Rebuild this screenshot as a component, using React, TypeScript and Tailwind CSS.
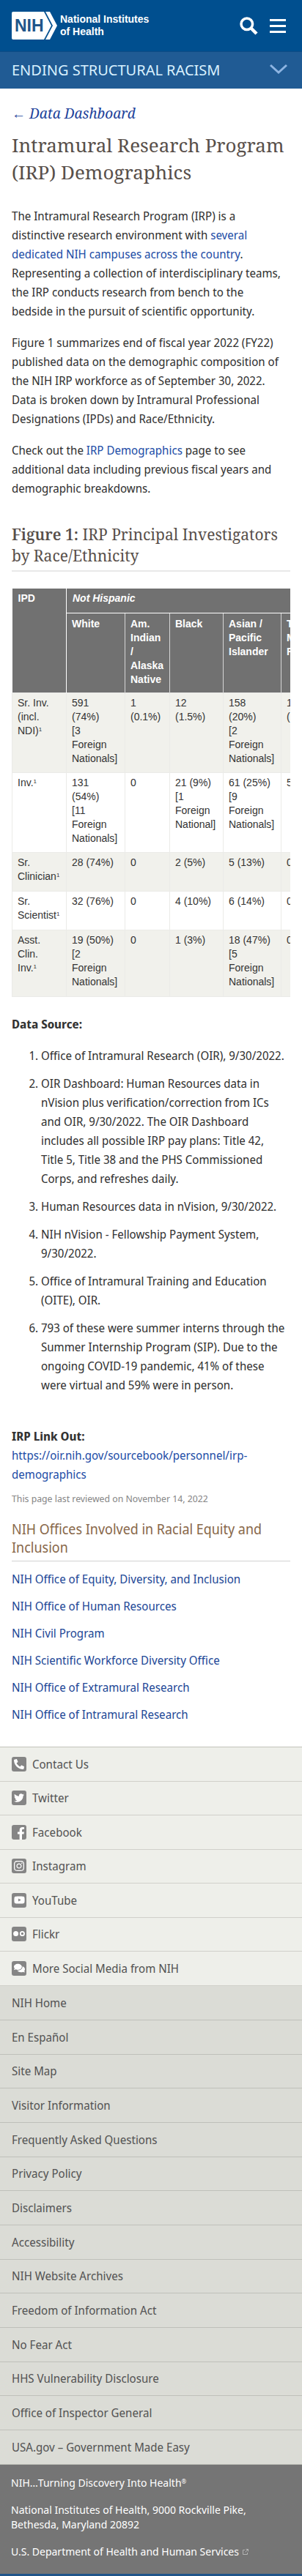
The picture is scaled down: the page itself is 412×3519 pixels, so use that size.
import type { ReactNode } from "react";
import { FaPhone, FaTwitter, FaFacebookF, FaInstagram, FaYoutube, FaComments } from "react-icons/fa";

function Logo() {
  return (
    <a href="#" aria-label="National Institutes of Health" className="flex items-center gap-1 text-white">
      <svg viewBox="0 0 62 38" className="h-[38px] w-[62px]" aria-hidden="true">
        <path d="M2 0H44L54 19L44 38H2Q0 38 0 36V2Q0 0 2 0Z" fill="#fff" />
        <path d="M46 0H52L62 19L52 38H46L56 19Z" fill="#fff" />
        <text x="4" y="27" fontSize="23" fontWeight="700" fill="#20558a" fontFamily="Liberation Sans, Arial, sans-serif">
          NIH
        </text>
      </svg>
      <span className="font-['Liberation_Sans',sans-serif] text-[14px] leading-[17px] font-bold">
        National Institutes
        <br />
        of Health
      </span>
    </a>
  );
}

function FlickrDots() {
  return (
    <svg viewBox="0 0 20 20" className="size-5" aria-hidden="true">
      <circle cx="5.6" cy="9.5" r="3.5" fill="#fff" />
      <circle cx="14.4" cy="9.5" r="2.6" fill="none" stroke="#fff" strokeWidth="1.8" />
    </svg>
  );
}

const social: { label: string; icon: ReactNode }[] = [
  { label: "Contact Us", icon: <FaPhone size={14} className="-scale-x-100" /> },
  { label: "Twitter", icon: <FaTwitter size={14} /> },
  { label: "Facebook", icon: <FaFacebookF size={17} className="translate-x-0.5 translate-y-0.5" /> },
  { label: "Instagram", icon: <FaInstagram size={16} /> },
  { label: "YouTube", icon: <FaYoutube size={15} /> },
  { label: "Flickr", icon: <FlickrDots /> },
  { label: "More Social Media from NIH", icon: <FaComments size={15} /> },
];

const siteLinks = [
  "NIH Home",
  "En Español",
  "Site Map",
  "Visitor Information",
  "Frequently Asked Questions",
  "Privacy Policy",
  "Disclaimers",
  "Accessibility",
  "NIH Website Archives",
  "Freedom of Information Act",
  "No Fear Act",
  "HHS Vulnerability Disclosure",
  "Office of Inspector General",
  "USA.gov – Government Made Easy",
];

const offices = [
  "NIH Office of Equity, Diversity, and Inclusion",
  "NIH Office of Human Resources",
  "NIH Civil Program",
  "NIH Scientific Workforce Diversity Office",
  "NIH Office of Extramural Research",
  "NIH Office of Intramural Research",
];

const sources = [
  "Office of Intramural Research (OIR), 9/30/2022.",
  "OIR Dashboard: Human Resources data in nVision plus verification/correction from ICs and OIR, 9/30/2022. The OIR Dashboard includes all possible IRP pay plans: Title 42, Title\u00a05, Title\u00a038 and the PHS Commissioned Corps, and refreshes daily.",
  "Human Resources data in nVision, 9/30/2022.",
  "NIH nVision - Fellowship Payment System, 9/30/2022.",
  "Office of Intramural Training and Education (OITE), OIR.",
  "793 of these were summer interns through the Summer Internship Program (SIP). Due to the ongoing COVID-19 pandemic, 41% of these were virtual and 59% were in person.",
];

const groups = ["White", "Am. Indian / Alaska Native", "Black", "Asian / Pacific Islander", "Two or More Races"];

const rows = [
  {
    name: "Sr. Inv. (incl. NDI)",
    height: "h-[109px]",
    cells: ["591\n(74%)\n[3\nForeign Nationals]", "1\n(0.1%)", "12\n(1.5%)", "158\n(20%)\n[2\nForeign Nationals]", "19\n(2%)"],
  },
  {
    name: "Inv.",
    height: "h-[109px]",
    cells: ["131\n(54%)\n[11\nForeign Nationals]", "0", "21 (9%)\n[1\nForeign National]", "61 (25%)\n[9\nForeign Nationals]", "5 (2%)"],
  },
  { name: "Sr. Clinician", height: "h-[53px]", cells: ["28 (74%)", "0", "2 (5%)", "5 (13%)", "0"] },
  { name: "Sr. Scientist", height: "h-[53px]", cells: ["32 (76%)", "0", "4 (10%)", "6 (14%)", "0"] },
  {
    name: "Asst.\nClin.\nInv.",
    height: "h-[91px]",
    cells: ["19 (50%)\n[2\nForeign Nationals]", "0", "1 (3%)", "18 (47%)\n[5\nForeign Nationals]", "0"],
  },
];

function InvestigatorTable() {
  return (
    <div className="mt-[23px] overflow-x-auto [scrollbar-width:none]">
      <table className="w-[430px] table-fixed border-collapse text-left align-top font-['Liberation_Sans',sans-serif] text-[14px] leading-[19px]">
        <colgroup>
          <col className="w-[74px]" />
          <col className="w-[80px]" />
          <col className="w-[61px]" />
          <col className="w-[73px]" />
          <col className="w-[79px]" />
          <col />
        </colgroup>
        <thead className="bg-[#717171] text-white">
          <tr className="h-[33px]">
            <th rowSpan={2} scope="col" className="border-r border-white px-2 py-1 align-top">
              IPD
            </th>
            <th colSpan={5} scope="colgroup" className="border-b border-white px-2 py-1 align-top italic">
              Not Hispanic
            </th>
          </tr>
          <tr className="h-[109px]">
            {groups.map((g) => (
              <th key={g} scope="col" className="border-r border-[#d6d6d6] px-[7px] py-[5px] align-top">
                {g}
              </th>
            ))}
          </tr>
        </thead>
        <tbody className="text-[#333]">
          {rows.map((row) => (
            <tr key={row.name} className={`${row.height} odd:bg-[#f1f1ec]`}>
              <th scope="row" className="border border-[#ebebe8] px-[7px] py-1 align-top font-normal whitespace-pre-line">
                {row.name}
                <sup className="text-[8px] leading-none">1</sup>
              </th>
              {row.cells.map((cell, i) => (
                <td key={i} className="border border-[#ebebe8] px-[7px] py-1 align-top whitespace-pre-line">
                  {cell}
                </td>
              ))}
            </tr>
          ))}
        </tbody>
      </table>
    </div>
  );
}

export default function App() {
  return (
    <div className="bg-white font-['Noto_Sans_Display','Noto_Sans',sans-serif] text-[16px] leading-[26px] text-[#333]">
      <header>
        <div className="flex h-[70px] items-center justify-between bg-[#004f8f] pr-[22px] pl-4">
          <Logo />
          <div className="flex items-center gap-4">
            <button type="button" aria-label="Search">
              <svg viewBox="0 0 25 25" className="size-[25px]" fill="none" stroke="#fff" strokeWidth="3.5" aria-hidden="true">
                <circle cx="9.8" cy="9.8" r="7.8" />
                <path d="M15.5 15.5L23 23" strokeWidth="4.5" />
              </svg>
            </button>
            <button type="button" aria-label="Menu" className="flex w-[22px] flex-col gap-[5px]">
              <span className="h-[3px] w-full bg-white" />
              <span className="h-[3px] w-full bg-white" />
              <span className="h-[3px] w-full bg-white" />
            </button>
          </div>
        </div>
        <button
          type="button"
          className="flex h-[51px] w-full items-center justify-between border-t border-[#0f4b85] bg-[#205b94] pr-5 pl-4 font-['Noto_Sans',sans-serif] text-[20px] text-[#d9f1ff]"
        >
          ENDING STRUCTURAL RACISM
          <svg viewBox="0 0 24 20" className="h-5 w-6" fill="none" stroke="#8db4e2" strokeWidth="3" aria-hidden="true">
            <path d="M1 3L12 13L23 3" />
          </svg>
        </button>
      </header>

      <main className="px-4 pt-5 pb-[31px]">
        <p className="font-['Noto_Serif',serif] text-[19px] leading-7 italic">
          <a href="#" className="text-[#20419a]">
            ← Data Dashboard
          </a>
        </p>
        <h1 className="mt-[11px] font-['Noto_Serif',serif] text-[26px] leading-[37px] text-[#584f4a]">
          Intramural Research Program (IRP) Demographics
        </h1>
        <p className="mt-7 pr-2">
          The Intramural Research Program (IRP) is a distinctive research environment with{" "}
          <a href="#" className="text-[#1f4fa8]">
            several dedicated NIH campuses across the country
          </a>
          . Representing a collection of interdisciplinary teams, the IRP conducts research from bench to the bedside in
          the pursuit of scientific opportunity.
        </p>
        <p className="mt-[17px]">
          Figure 1 summarizes end of fiscal year 2022 (FY22) published data on the demographic composition of the NIH
          IRP workforce as of September 30, 2022. Data is broken down by Intramural Professional Designations (IPDs) and
          Race/Ethnicity.
        </p>
        <p className="mt-[17px]">
          Check out the{" "}
          <a href="#" className="text-[#1f4fa8]">
            IRP Demographics
          </a>{" "}
          page to see additional data including previous fiscal years and demographic breakdowns.
        </p>

        <h2 className="mt-9 border-b-2 border-[#e8e8e8] pb-[5px] font-['Noto_Serif',serif] text-[21px] leading-[29px] text-[#584f4a]">
          <strong className="font-semibold">Figure 1:</strong> IRP Principal Investigators by Race/Ethnicity
        </h2>
        <InvestigatorTable />

        <p className="mt-6 font-bold">Data Source:</p>
        <ol className="mt-[17px] flex list-decimal flex-col gap-3 pl-10">
          {sources.map((s) => (
            <li key={s}>{s}</li>
          ))}
        </ol>

        <p className="mt-11">
          <strong className="font-bold">IRP Link Out:</strong>
          <br />
          <a href="#" className="text-[#1f4fa8]">
            https://oir.nih.gov/sourcebook/personnel/irp-demographics
          </a>
        </p>
        <p className="mt-[10px] text-[13px] leading-5 text-[#888]">This page last reviewed on November 14, 2022</p>

        <h2 className="mt-5 border-b border-[#d2d2d2] pb-[5px] text-[19px] leading-[25px] text-[#8a6a4d]">
          NIH Offices Involved in Racial Equity and Inclusion
        </h2>
        <ul className="mt-[11px] flex flex-col gap-[11px]">
          {offices.map((o) => (
            <li key={o}>
              <a href="#" className="text-[#1f4a98]">
                {o}
              </a>
            </li>
          ))}
        </ul>
      </main>

      <footer className="text-[#555]">
        <ul className="border-t border-[#c3c3bb] bg-[#eeefea]">
          {social.map(({ label, icon }) => (
            <li key={label} className="border-b border-[#d0d0ca] odd:h-[47px] even:h-[46px]">
              <a href="#" className="flex h-full items-center gap-2 px-4">
                <span className="flex size-5 items-center justify-center overflow-hidden rounded-[3px] bg-[#858585] text-white">
                  {icon}
                </span>
                {label}
              </a>
            </li>
          ))}
        </ul>
        <ul className="bg-[#dbdcd6]">
          {siteLinks.map((label) => (
            <li key={label} className="h-[47px] border-b border-[#bfc0ba] nth-[3n]:h-[46px]">
              <a href="#" className="flex h-full items-center px-4">
                {label}
              </a>
            </li>
          ))}
        </ul>
        <div className="flex flex-col gap-[17px] border-b-[3px] border-[#20558a] bg-[#757575] px-[15px] pt-[15px] pb-5 font-['Noto_Sans',sans-serif] text-[14px] leading-5 text-white">
          <p>
            NIH…Turning Discovery Into Health<sup className="text-[8px] leading-none">®</sup>
          </p>
          <p>
            National Institutes of Health, 9000 Rockville Pike,
            <br />
            Bethesda, Maryland 20892
          </p>
          <p>
            <a href="#" className="inline-flex items-center gap-1">
              U.S. Department of Health and Human Services
              <svg viewBox="0 0 10 10" className="size-2.5" fill="none" stroke="#b5b5b5" aria-hidden="true">
                <path d="M4 2.5H1.5V8.5H7.5V6M5.5 1.5H8.5V4.5M8.5 1.5L4.5 5.5" />
              </svg>
            </a>
          </p>
        </div>
      </footer>
    </div>
  );
}
